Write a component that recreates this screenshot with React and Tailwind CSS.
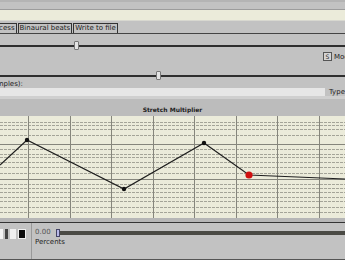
import React from 'react';

const hLines = [6, 9, 13, 19, 28, 33, 38, 41, 46, 51, 57, 63, 68, 72, 76, 81, 85, 91, 96];
const vLines = [28, 70, 111, 153, 194, 236, 277, 319];
const points = [[0, 49], [27, 24], [124, 73], [204, 27], [249, 59], [345, 63]];

const Slider = ({ thumb }) => (
  <div className="relative h-[10px]">
    <div className="absolute left-0 right-0 top-[4px] h-[2px] bg-[#2e2e2e]" />
    <div className="absolute top-0 w-[5px] h-[9px] bg-[#e4e4e4] border border-[#777] rounded-[1px]" style={{ left: thumb }} />
  </div>
);

const Graph = () => (
  <svg width="345" height="102" className="block">
    <rect width="345" height="102" fill="#ebebda" />
    {hLines.map((y) => (
      <line key={y} x1="0" x2="345" y1={y + 0.5} y2={y + 0.5}
        stroke={y === 28 || y === 63 ? '#85857c' : '#a4a498'}
        strokeDasharray={y === 28 || y === 63 ? '' : '3 1'} />
    ))}
    {vLines.map((x) => (
      <line key={x} x1={x + 0.5} x2={x + 0.5} y1="0" y2="102" stroke="#86867c" />
    ))}
    <polyline points={points.map((p) => p.join(',')).join(' ')} fill="none" stroke="#1e1e1e" strokeWidth="1.2" />
    {points.slice(1, 4).map(([x, y]) => (
      <circle key={x} cx={x} cy={y} r="2.2" fill="#111" />
    ))}
    <circle cx="249" cy="59" r="3.6" fill="#d01010" />
  </svg>
);

export default function App() {
  return (
    <div className="w-[345px] h-[260px] overflow-hidden bg-[#c2c2c2] text-[7px] leading-none text-[#222]" style={{ fontFamily: '"DejaVu Sans", sans-serif' }}>
      {/* top strip */}
      <div className="h-[10px] border-t-[2px] border-[#b4b4b4] border-b border-b-[#9c9c9c]" />
      <div className="h-[11px] bg-[#ebebda] border-b border-[#d8d8d0]" />
      <div className="h-[3px]" />

      {/* tabs */}
      <div className="flex items-end h-[10px] border-b border-[#444]">
        <div className="ml-[-14px] h-[10px] px-[1px] border border-[#333] border-b-0 flex items-center">Process</div>
        <div className="h-[10px] px-[1px] border border-[#333] border-b-0 flex items-center ml-[1px]">Binaural beats</div>
        <div className="h-[10px] px-[1px] border border-[#333] border-b-0 flex items-center ml-[1px]">Write to file</div>
      </div>

      <div className="h-[7px]" />
      <Slider thumb={74} />

      <div className="flex justify-end items-start h-[20px] pt-[1px]">
        <div className="w-[9px] h-[9px] border border-[#555] bg-[#d4d4d4] flex items-center justify-center text-[6px]">S</div>
        <span className="ml-[2px] mt-[2px] w-[11px] overflow-hidden whitespace-nowrap">Mode</span>
      </div>

      <Slider thumb={156} />

      <div className="h-[7px] flex items-center ml-[-14px]">(samples):</div>
      <div className="flex items-center h-[8px]">
        <div className="w-[327px] h-[8px] bg-[#e6e6e6]" />
        <span className="ml-[4px] whitespace-nowrap">Type</span>
      </div>

      {/* graph header */}
      <div className="h-[3px] bg-[#cfcfcf]" />
      <div className="h-[17px] bg-[#bcbcbc] flex items-end justify-center pb-[3px] font-bold text-[6px]">
        Stretch Multiplier
      </div>

      <Graph />

      {/* bottom controls */}
      <div className="h-[4px] bg-[#b6b6b6]" />
      <div className="h-[1px] bg-[#333]" />
      <div className="flex h-[36px]">
        <div className="w-[32px] flex items-start pt-[6px] gap-[2px] border-r border-[#999]">
          <div className="w-[3px] h-[10px] bg-[#f4f4f4]" />
          <div className="w-[3px] h-[10px] bg-[#444]" />
          <div className="w-[6px] h-[10px] bg-[#f0f0f0]" />
          <div className="w-[8px] h-[10px] bg-[#0c0c0c] border border-[#eee]" />
        </div>
        <div className="flex-1 pl-[3px] pt-[5px]">
          <div className="flex items-center h-[9px]">
            <span className="text-[#555]">0.00</span>
            <div className="ml-[5px] w-[4px] h-[8px] bg-[#b8b8e8] border border-[#446]" />
            <div className="flex-1 h-[4px] bg-[#4a4a44]" />
          </div>
          <div className="mt-[2px]">Percents</div>
        </div>
      </div>
      <div className="h-[1px] bg-[#555]" />
    </div>
  );
}
